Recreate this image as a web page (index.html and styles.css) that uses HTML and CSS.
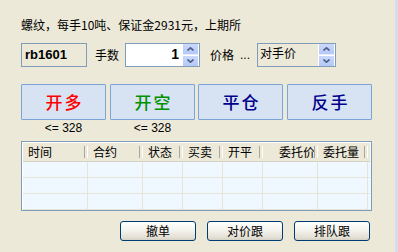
FILE: index.html
```html
<!DOCTYPE html>
<html lang="zh-CN">
<head>
<meta charset="utf-8">
<title>下单</title>
<link rel="stylesheet" href="styles.css">
</head>
<body>
<div class="window">
  <div class="panel">
    <div class="title">螺纹，每手10吨、保证金2931元，上期所</div>
    <div class="params">
      <div class="code">rb1601</div>
      <span class="lbl lbl-qty">手数</span>
      <div class="spin qty">
        <span class="val">1</span>
        <div class="spin-btns">
          <span class="sb"><svg width="7" height="4" viewBox="0 0 7 4"><path d="M0.5 3.5 L3.5 0.8 L6.5 3.5" fill="none" stroke="#4d6185" stroke-width="1.6"/></svg></span>
          <span class="sb"><svg width="7" height="4" viewBox="0 0 7 4"><path d="M0.5 0.5 L3.5 3.2 L6.5 0.5" fill="none" stroke="#4d6185" stroke-width="1.6"/></svg></span>
        </div>
      </div>
      <span class="lbl lbl-price">价格</span>
      <span class="dots">...</span>
      <div class="spin combo">
        <span class="val">对手价</span>
        <div class="spin-btns">
          <span class="sb"><svg width="7" height="4" viewBox="0 0 7 4"><path d="M0.5 3.5 L3.5 0.8 L6.5 3.5" fill="none" stroke="#4d6185" stroke-width="1.6"/></svg></span>
          <span class="sb"><svg width="7" height="4" viewBox="0 0 7 4"><path d="M0.5 0.5 L3.5 3.2 L6.5 0.5" fill="none" stroke="#4d6185" stroke-width="1.6"/></svg></span>
        </div>
      </div>
    </div>
    <div class="actions">
      <button class="act buy">开多</button>
      <button class="act sell">开空</button>
      <button class="act close">平仓</button>
      <button class="act reverse">反手</button>
    </div>
    <div class="limits">
      <span class="limit">&lt;= 328</span>
      <span class="limit">&lt;= 328</span>
    </div>
    <div class="orders">
      <div class="row head">
        <span class="c c1">时间</span>
        <span class="c c2">合约</span>
        <span class="c c3">状态</span>
        <span class="c c4">买卖</span>
        <span class="c c5">开平</span>
        <span class="c c6 right">委托价</span>
        <span class="c c7">委托量</span>
      </div>
      <div class="row body"><span class="c c1"></span><span class="c c2"></span><span class="c c3"></span><span class="c c4"></span><span class="c c5"></span><span class="c c6"></span><span class="c c7"></span></div>
      <div class="row body"><span class="c c1"></span><span class="c c2"></span><span class="c c3"></span><span class="c c4"></span><span class="c c5"></span><span class="c c6"></span><span class="c c7"></span></div>
      <div class="row body"><span class="c c1"></span><span class="c c2"></span><span class="c c3"></span><span class="c c4"></span><span class="c c5"></span><span class="c c6"></span><span class="c c7"></span></div>
    </div>
    <div class="footer">
      <button class="xp">撤单</button>
      <button class="xp">对价跟</button>
      <button class="xp">排队跟</button>
    </div>
  </div>
  <div class="strip"></div>
</div>
</body>
</html>
```

FILE: styles.css
```css
* { box-sizing: border-box; }
html, body {
  margin: 0;
  padding: 0;
  width: 398px;
  height: 252px;
  overflow: hidden;
  background: #ece9d8;
  font-family: "Noto Sans CJK SC", "Liberation Sans", sans-serif;
  font-size: 12px;
  color: #000;
}
.window {
  display: flex;
  width: 398px;
  height: 252px;
}
.panel {
  width: 395px;
  padding: 17px 0 0 21px;
}
.strip {
  width: 3px;
  background: #d7dbea;
}
.title {
  height: 16px;
  line-height: 16px;
  white-space: nowrap;
}
.params {
  display: flex;
  align-items: center;
  margin-top: 10px;
  height: 24px;
}
.code {
  width: 66px;
  height: 24px;
  border: 1px solid #7f9db9;
  font-family: "Liberation Sans", "DejaVu Sans", sans-serif;
  font-weight: bold;
  font-size: 13px;
  line-height: 21px;
  padding-left: 3px;
}
.lbl {
  line-height: 16px;
  white-space: nowrap;
}
.lbl-qty { margin-left: 8px; }
.lbl-price { margin-left: 10px; }
.dots {
  margin-left: 6px;
  font-family: "Liberation Sans", sans-serif;
  font-size: 12px;
  line-height: 16px;
  width: 11px;
}
.spin {
  display: flex;
  height: 24px;
  border: 1px solid #7f9db9;
}
.spin.qty {
  margin-left: 6px;
  width: 75px;
  background: #fff;
}
.spin.combo {
  margin-left: 6px;
  width: 79px;
  background: #ece9d8;
}
.spin .val {
  flex: 1;
  white-space: nowrap;
}
.spin.qty .val {
  text-align: right;
  font-family: "Liberation Sans", sans-serif;
  font-weight: bold;
  font-size: 14px;
  line-height: 21px;
  padding-right: 3px;
}
.spin.combo .val {
  line-height: 16px;
  padding-left: 2px;
  padding-top: 1px;
}
.spin-btns {
  width: 17px;
  display: flex;
  flex-direction: column;
  border: 1px solid #fff;
  border-top: 0;
  border-bottom: 0;
}
.sb {
  flex: 1;
  display: flex;
  align-items: center;
  justify-content: center;
  background: linear-gradient(#cad8fb, #b5c9f7);
  border-bottom: 1px solid #e4ecfd;
}
.sb:last-child { border-bottom: 0; border-top: 1px solid #fff; }
.actions {
  display: flex;
  margin-top: 17px;
  height: 36px;
}
.act {
  width: 85px;
  height: 36px;
  margin: 0;
  padding: 0;
  background: #d7e3f3;
  border: 1px solid #7ba4d9;
  border-radius: 1px;
  font-family: "Noto Sans CJK SC", sans-serif;
  font-size: 17px;
  font-weight: 500;
  letter-spacing: 2px;
  text-indent: 2px;
  line-height: 20px;
}
.act + .act { margin-left: 4px; }
.act.close { margin-left: 3px; }
.buy { color: #ff0000; }
.sell { color: #009100; }
.close, .reverse { color: #00008b; }
.limits {
  display: flex;
  height: 16px;
}
.limit {
  width: 85px;
  text-align: center;
  font-family: "Liberation Sans", sans-serif;
  font-size: 12px;
  line-height: 16px;
}
.limit + .limit { margin-left: 4px; }
.orders {
  margin-top: 5px;
  width: 351px;
  height: 70px;
  border: 1px solid #7f9db9;
  background: #f0f8ff;
  padding: 1px 1px 0 1px;
  overflow: hidden;
  box-shadow: inset 0 1px 0 #fff, inset 1px 0 0 #fff;
}
.row {
  display: flex;
}
.row.head {
  height: 19px;
  background: #ece9d8;
  border-bottom: 1px solid #d6d2c2;
}
.c {
  flex: none;
  white-space: nowrap;
}
.c1 { width: 65px; }
.c2 { width: 55px; }
.c3 { width: 40px; }
.c4 { width: 40px; }
.c5 { width: 40px; }
.c6 { width: 55px; }
.c7 { width: 50px; }
.head .c {
  line-height: 18px;
  padding-left: 5px;
  position: relative;
}
.head .c::after {
  content: "";
  position: absolute;
  right: 0;
  top: 3px;
  bottom: 3px;
  width: 2px;
  border-left: 1px solid #aca899;
  border-right: 1px solid #fff;
}
.head .c.right {
  text-align: right;
  padding: 0 3px 0 0;
}
.row.body {
  height: 16px;
  border-bottom: 1px solid #e6e3d8;
}
.body .c {
  border-right: 1px solid #e6e3d8;
}
.footer {
  display: flex;
  justify-content: flex-end;
  width: 349px;
  margin-top: 10px;
}
.xp {
  width: 76px;
  height: 20px;
  margin: 0 0 0 11px;
  padding: 0;
  border: 1px solid #003c74;
  border-radius: 3px;
  background: linear-gradient(#ffffff, #f4f3ee 45%, #e3e0d4 85%, #d6d0c5);
  font-family: "Noto Sans CJK SC", sans-serif;
  font-size: 12px;
  line-height: 16px;
  color: #000;
}
```
